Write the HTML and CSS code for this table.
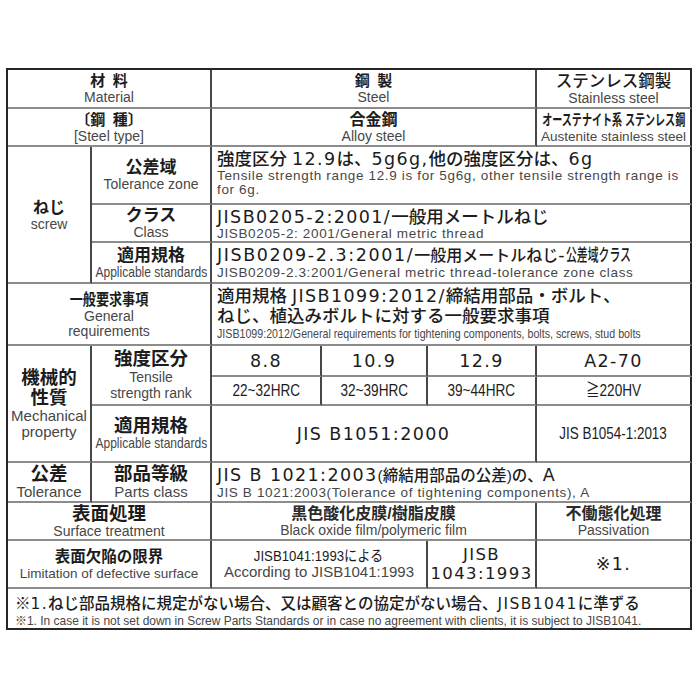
FILE: index.html
```html
<!DOCTYPE html>
<html lang="ja">
<head>
<meta charset="utf-8">
<title>材料仕様</title>
<link rel="stylesheet" href="styles.css">
</head>
<body>
<div class="sheet">
  <!-- row 1 -->
  <div class="c s2"><b class="jh">材&ensp;料</b><span class="en">Material</span></div>
  <div class="c s3"><b class="jh">鋼&ensp;製</b><span class="en">Steel</span></div>
  <div class="c e"><span class="jm">ステンレス鋼製</span><span class="en">Stainless steel</span></div>
  <!-- row 2 -->
  <div class="c s2"><b class="jh">〔鋼&ensp;種〕</b><span class="en">[Steel type]</span></div>
  <div class="c s3"><b class="jh2">合金鋼</b><span class="en">Alloy steel</span></div>
  <div class="c e"><b class="cond jaus">オーステナイト系 ステンレス鋼</b><span class="en en-aus">Austenite stainless steel</span></div>
  <!-- rows 3-5 -->
  <div class="c r3"><b class="jn">ねじ</b><span class="en">screw</span></div>
  <div class="c"><b class="jl">公差域</b><span class="en">Tolerance zone</span></div>
  <div class="c t s4 e">
    <div class="big">強度区分 <span class="w">12.9</span>は、<span class="w">5g6g,</span>他の強度区分は、<span class="w">6g</span></div>
    <div class="sm">Tensile strength range 12.9 is for 5g6g, other tensile strength range is<br>for 6g.</div>
  </div>
  <div class="c"><b class="jl">クラス</b><span class="en">Class</span></div>
  <div class="c t s4 e">
    <div class="big"><span class="w">JISB0205-2:2001/</span>一般用メートルねじ</div>
    <div class="sm">JISB0205-2: 2001/General metric thread</div>
  </div>
  <div class="c"><b class="jl">適用規格</b><span class="en cond app">Applicable standards</span></div>
  <div class="c t s4 e">
    <div class="big"><span class="w wide">JISB0209-2.3:2001/</span><span class="j16">一般用メートルねじ</span><span class="w">-</span><span class="cond squeeze">公差域クラス</span></div>
    <div class="sm">JISB0209-2.3:2001/General metric thread-tolerance zone class</div>
  </div>
  <!-- row 6 -->
  <div class="c s2"><b class="cond jgen">一般要求事項</b><span class="en">General</span><span class="en">requirements</span></div>
  <div class="c t s4 e">
    <div class="big">適用規格 <span class="w">JISB1099:2012/</span>締結用部品・ボルト、</div>
    <div class="big">ねじ、植込みボルトに対する一般要求事項</div>
    <div class="sm2"><span class="cond gen-en">JISB1099:2012/General requirements for tightening components, bolts, screws, stud bolts</span></div>
  </div>
  <!-- rows 7-9 -->
  <div class="c r3"><b class="jx">機械的</b><b class="jx">性質</b><span class="en en15">Mechanical</span><span class="en en15">property</span></div>
  <div class="c r2"><b class="jx">強度区分</b><span class="en en-t">Tensile</span><span class="en en-t">strength rank</span></div>
  <div class="c"><span class="num w">8.8</span></div>
  <div class="c"><span class="num w">10.9</span></div>
  <div class="c"><span class="num w">12.9</span></div>
  <div class="c e"><span class="num w">A2-70</span></div>
  <div class="c"><span class="hrc cond">22~32HRC</span></div>
  <div class="c"><span class="hrc cond">32~39HRC</span></div>
  <div class="c"><span class="hrc cond">39~44HRC</span></div>
  <div class="c e"><span class="hrc cond">≧220HV</span></div>
  <div class="c"><b class="jx">適用規格</b><span class="en cond app2">Applicable standards</span></div>
  <div class="c s3"><span class="num w">JIS B1051:2000</span></div>
  <div class="c e"><span class="hrc cond jis54">JIS B1054-1:2013</span></div>
  <!-- row 10 -->
  <div class="c"><b class="jx">公差</b><span class="en en15">Tolerance</span></div>
  <div class="c"><b class="jx">部品等級</b><span class="en en15">Parts class</span></div>
  <div class="c t s4 e">
    <div class="big"><span class="w">JIS B 1021:2003</span><span class="j155">(締結用部品の公差)の、</span><span class="w">A</span></div>
    <div class="sm">JIS B 1021:2003(Tolerance of tightening components), A</div>
  </div>
  <!-- row 11 -->
  <div class="c s2"><b class="jx">表面処理</b><span class="en">Surface treatment</span></div>
  <div class="c s3"><b class="jm2">黒色酸化皮膜/樹脂皮膜</b><span class="en">Black oxide film/polymeric film</span></div>
  <div class="c e"><b class="jm2">不働態化処理</b><span class="en">Passivation</span></div>
  <!-- row 12 -->
  <div class="c s2"><b class="jd">表面欠陥の限界</b><span class="en en-lim">Limitation of defective surface</span></div>
  <div class="c s2"><span class="mid cond">JISB1041:1993による</span><span class="en en-acc">According to JISB1041:1993</span></div>
  <div class="c"><span class="num2 w">JISB</span><span class="num2 w">1043:1993</span></div>
  <div class="c e"><span class="num w">※1.</span></div>
  <!-- row 13 -->
  <div class="c t s6 e foot">
    <div class="fj">※<span class="w">1.</span>ねじ部品規格に規定がない場合、又は顧客との協定がない場合、<span class="w">JISB1041</span>に準ずる</div>
    <div class="fe"><span class="cond foot-en">※1. In case it is not set down in Screw Parts Standards or in case no agreement with clients, it is subject to JISB1041.</span></div>
  </div>
</div>
</body>
</html>
```
FILE: styles.css
```css
* { box-sizing: border-box; }
html, body { margin: 0; background: #fff; }
body {
  font-family: "Liberation Sans", "Noto Sans CJK JP", sans-serif;
  color: #1c1c1c;
}
.sheet {
  margin: 68px 0 0 6px;
  width: 686px;
  display: grid;
  grid-template-columns: 84px 120px 110px 106px 109px 155px;
  grid-template-rows: 39px 38px 58px 38px 41px 62px 31px 29px 57px 40px 38px 48px 41px;
  border-top: 2px solid #262626;
  border-left: 2px solid #262626;
}
.c {
  display: flex;
  flex-direction: column;
  align-items: center;
  justify-content: center;
  text-align: center;
  min-width: 0;
  border-right: 2px solid #474747;
  border-bottom: 2px solid #8c8c8c;
  white-space: nowrap;
}
.e { border-right-color: #262626; }
.foot { border-bottom-color: #262626; }
.s2 { grid-column: span 2; }
.s3 { grid-column: span 3; }
.s4 { grid-column: span 4; }
.s6 { grid-column: span 6; }
.r2 { grid-row: span 2; }
.r3 { grid-row: span 3; }

.t {
  align-items: flex-start;
  justify-content: flex-start;
  text-align: left;
  padding: 2px 0 0 5px;
}

.cond { display: inline-block; white-space: nowrap; }

/* Japanese labels */
.jh { font-size: 15px; line-height: 18px; font-weight: 700; }
.jh2 { font-size: 16px; line-height: 18px; font-weight: 700; }
.jm { font-size: 16.5px; line-height: 19px; font-weight: 500; }
.jaus { font-size: 15px; line-height: 18px; font-weight: 700; transform: scaleX(0.67); }
.jn { font-size: 16px; line-height: 19px; font-weight: 700; }
.jl { font-size: 17px; line-height: 19px; font-weight: 700; }
.jx { font-size: 18.5px; line-height: 20px; font-weight: 700; }
.jgen { font-size: 16px; line-height: 19px; font-weight: 700; transform: scaleX(0.82); }
.jm2 { font-size: 16px; line-height: 18px; font-weight: 700; color: #2a2a2a; }
.jd { font-size: 15.5px; line-height: 18px; font-weight: 700; }

/* English labels */
.en { font-size: 14px; line-height: 15px; color: #474747; }
.en15 { font-size: 15px; line-height: 16px; }
.en-t { font-size: 14px; line-height: 16px; }
.en-aus { font-size: 13.5px; }
.en-lim { font-size: 13.5px; }
.en-acc { font-size: 15px; line-height: 16px; }
.app { font-size: 14.5px; transform: scaleX(0.83); }
.app2 { font-size: 14.5px; transform: scaleX(0.83); }

/* content */
.big { font-size: 17.5px; line-height: 20px; white-space: nowrap; font-weight: 500; }
.j16 { font-size: 16px; }
.j155 { font-size: 15.5px; }
.squeeze { transform: scaleX(0.62); transform-origin: left center; }
.sm { font-size: 13.5px; line-height: 14px; color: #474747; letter-spacing: 0.65px; }
.sm2 { font-size: 13px; line-height: 14px; color: #474747; margin-top: 1px; }
.gen-en { transform: scaleX(0.82); transform-origin: left center; }

.w { font-family: "DejaVu Sans", "Noto Sans CJK JP", sans-serif; letter-spacing: 1.4px; }
.wide { letter-spacing: 1.6px; }
.num { font-size: 17.5px; line-height: 20px; }
.num2 { font-size: 16.5px; line-height: 19px; }
.hrc { font-size: 17px; line-height: 20px; transform: scaleX(0.8); }
.jis54 { transform: scaleX(0.79); }
.mid { font-size: 15px; line-height: 16px; transform: scaleX(0.88); }

.fj { font-size: 15.5px; line-height: 20px; font-weight: 500; padding-left: 2px; margin-top: 3px; }
.fe { font-size: 13px; line-height: 13px; color: #474747; padding-left: 2px; }
.foot-en { transform: scaleX(0.92); transform-origin: left center; }
```
